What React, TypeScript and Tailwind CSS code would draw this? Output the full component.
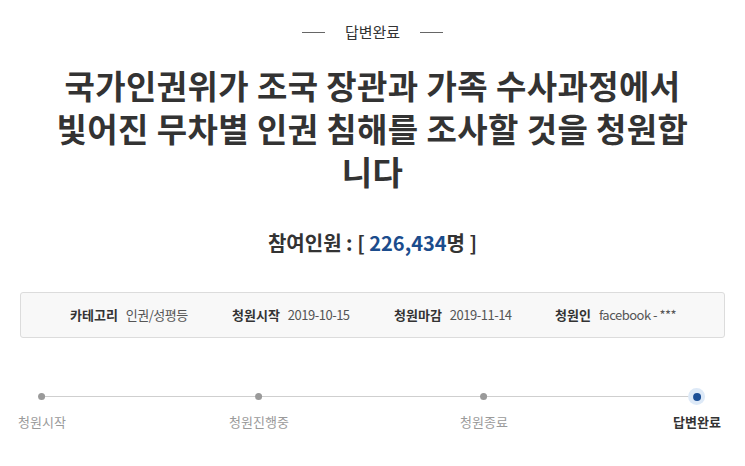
const font = { fontFamily: '"Noto Sans CJK KR", "Noto Sans", sans-serif' };

const steps = [
  { label: '청원시작', x: 42 },
  { label: '청원진행중', x: 259 },
  { label: '청원종료', x: 484 },
  { label: '답변완료', x: 697, active: true },
];

function InfoItem({ label, value }: { label: string; value: string }) {
  return (
    <div className="flex items-center gap-[8px]">
      <span className="text-[13px] font-bold text-[#333]">{label}</span>
      <span className="text-[13px] text-[#555] tracking-[-0.5px]">{value}</span>
    </div>
  );
}

export default function App() {
  return (
    <div className="w-[745px] h-[466px] bg-white overflow-hidden" style={font}>
      {/* status header */}
      <div className="flex items-center justify-center gap-[20px] pt-[20px]">
        <div className="w-[23px] h-px bg-[#666]" />
        <span className="text-[15px] text-[#333] leading-[24px]">답변완료</span>
        <div className="w-[23px] h-px bg-[#666]" />
      </div>

      <h1 className="mt-[20px] text-center text-[33px] font-bold leading-[43px] tracking-[0.4px] text-[#333]">
        국가인권위가 조국 장관과 가족 수사과정에서
        <br />
        빛어진 무차별 인권 침해를 조사할 것을 청원합
        <br />
        니다
      </h1>

      <div className="mt-[36px] text-center text-[20px] font-bold leading-[28px] text-[#333]">
        참여인원 : [ <span className="text-[#1b4c8c]">226,434</span>명 ]
      </div>

      {/* info box */}
      <div className="mx-[20px] mt-[35px] h-[46px] rounded-[3px] border border-[#dcdcdc] bg-[#f8f8f8] flex items-center pl-[49px]">
        <div className="w-[162px]">
          <InfoItem label="카테고리" value="인권/성평등" />
        </div>
        <div className="w-[162px]">
          <InfoItem label="청원시작" value="2019-10-15" />
        </div>
        <div className="w-[161px]">
          <InfoItem label="청원마감" value="2019-11-14" />
        </div>
        <InfoItem label="청원인" value="facebook - ***" />
      </div>

      {/* progress */}
      <div className="relative mt-[50px] h-[60px]">
        <div className="absolute left-[42px] w-[655px] top-[8px] h-px bg-[#cfcfcf]" />
        {steps.map((s) => (
          <div
            key={s.label}
            className="absolute top-0 flex flex-col items-center -translate-x-1/2"
            style={{ left: s.x }}
          >
            {s.active ? (
              <div className="w-[17px] h-[17px] rounded-full bg-[#dde9f7] flex items-center justify-center">
                <div className="w-[8px] h-[8px] rounded-full bg-[#1b4f96]" />
              </div>
            ) : (
              <div className="w-[17px] h-[17px] flex items-center justify-center">
                <div className="w-[7px] h-[7px] rounded-full bg-[#9a9a9a]" />
              </div>
            )}
            <span
              className={
                s.active
                  ? 'mt-[7px] text-[13px] font-bold text-[#333] whitespace-nowrap'
                  : 'mt-[7px] text-[13px] text-[#9a9a9a] whitespace-nowrap'
              }
            >
              {s.label}
            </span>
          </div>
        ))}
      </div>
    </div>
  );
}
